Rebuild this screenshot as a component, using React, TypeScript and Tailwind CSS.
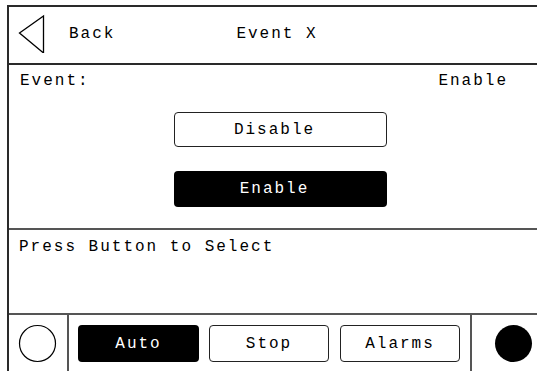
import React from "react";

const mono = { fontFamily: '"Liberation Mono", "DejaVu Sans Mono", monospace' };

export default function App() {
  return (
    <div
      className="w-[537px] h-[371px] bg-white overflow-hidden text-black text-[16px] leading-[18px] tracking-[2px]"
      style={mono}
    >
      <div className="ml-[7px] mt-[5px] w-[540px] h-[366px] border-l-2 border-t-2 border-[#2a2a2a] flex flex-col">
        {/* Header */}
        <div className="h-[58px] shrink-0 border-b-2 border-[#2a2a2a] flex items-center">
          <svg width="27" height="40" viewBox="0 0 27 40" className="ml-[9px] mt-[-4px]">
            <polygon points="1.5,20 25.5,3 25.5,40" fill="none" stroke="#000" strokeWidth="1.3" />
          </svg>
          <span className="ml-[24px] mt-[-2px]">Back</span>
          <span className="ml-[121px] mt-[-2px]">Event X</span>
        </div>
        {/* Content */}
        <div className="h-[165px] shrink-0 border-b-2 border-[#555] flex flex-col">
          <div className="flex justify-between pt-[7px] pl-[11px] w-[528px] pr-[29px]">
            <span>Event:</span>
            <span>Enable</span>
          </div>
          <div className="flex flex-col gap-[24px] ml-[165px] mt-[22px]">
            <div className="w-[213px] h-[35px] border border-[#222] rounded-[4px] flex items-center justify-center pr-[12px]">
              Disable
            </div>
            <div className="w-[213px] h-[36px] bg-black text-white rounded-[4px] flex items-center justify-center pr-[12px]">
              Enable
            </div>
          </div>
        </div>
        {/* Message */}
        <div className="h-[85px] shrink-0 border-b-2 border-[#555] pl-[10px] pt-[8px]">
          Press Button to Select
        </div>
        {/* Bottom bar */}
        <div className="flex-1 flex">
          <div className="w-[60px] shrink-0 border-r-2 border-[#555] flex items-start pt-[9px] pl-[9px]">
            <svg width="39" height="39" viewBox="0 0 39 39">
              <circle cx="19.5" cy="19.5" r="18" fill="none" stroke="#000" strokeWidth="1.2" />
            </svg>
          </div>
          <div className="flex items-start pt-[10px] pl-[9px] gap-[10px]">
            <div className="w-[121px] h-[37px] bg-black text-white rounded-[4px] flex items-center justify-center">
              Auto
            </div>
            <div className="w-[120px] h-[37px] border border-[#222] rounded-[4px] flex items-center justify-center">
              Stop
            </div>
            <div className="w-[120px] h-[37px] border border-[#222] rounded-[4px] flex items-center justify-center ml-[1px]">
              Alarms
            </div>
          </div>
          <div className="ml-[10px] w-[66px] shrink-0 border-l-2 border-[#555] flex items-start pt-[9px] pl-[22px]">
            <svg width="39" height="39" viewBox="0 0 39 39">
              <circle cx="19.5" cy="19.5" r="18.5" fill="#000" />
            </svg>
          </div>
        </div>
      </div>
    </div>
  );
}
